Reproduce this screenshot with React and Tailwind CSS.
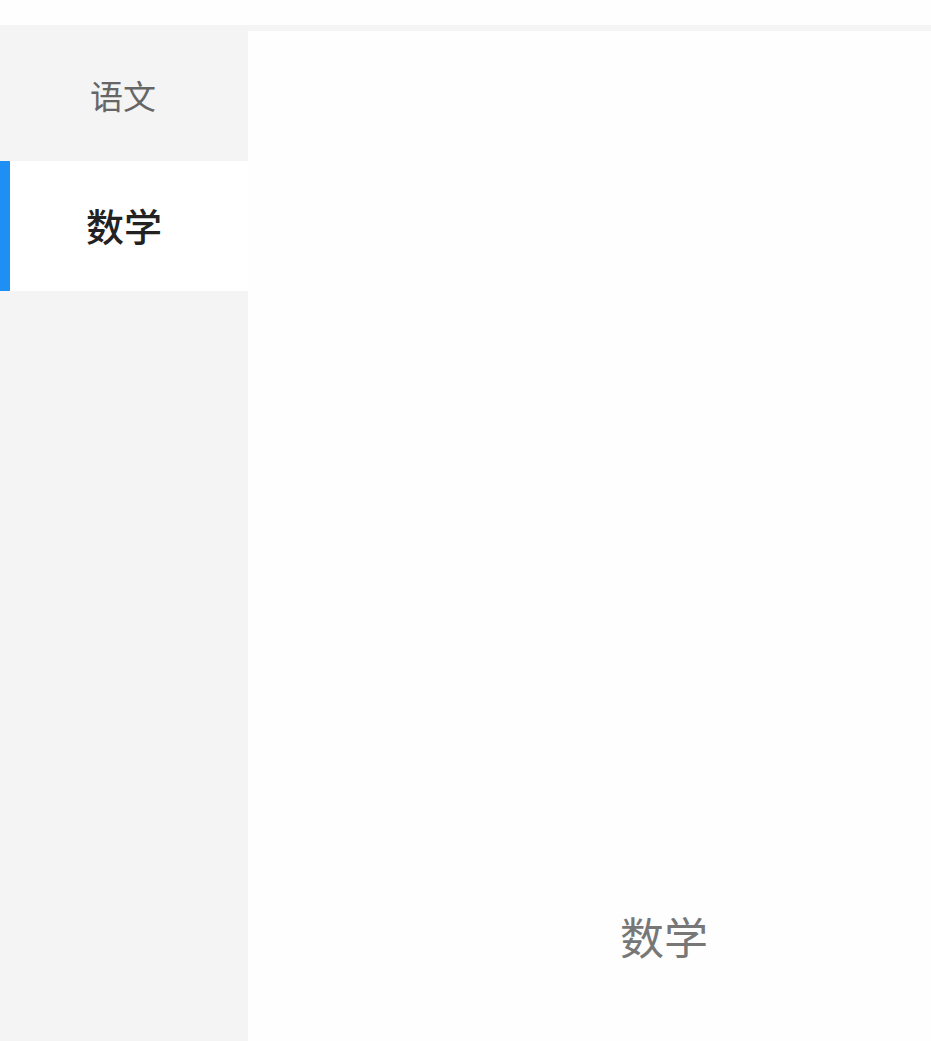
export default function App() {
  const font = { fontFamily: '"Noto Sans CJK SC", "Noto Sans", sans-serif' };
  return (
    <div className="w-[931px] h-[1041px] bg-white flex flex-col overflow-hidden" style={font}>
      <div className="h-[25px] bg-[#fefefe]" />
      <div className="h-[6px] bg-[#f4f4f4]" />
      <div className="flex flex-1">
        <div className="w-[248px] bg-[#f4f4f4] flex flex-col">
          <div className="h-[130px] flex items-center justify-center pr-[2px] text-[33px] text-[#666666]">
            语文
          </div>
          <div className="h-[130px] flex items-center justify-center bg-white border-l-[10px] border-[#1e8ff5] pr-[10px] pb-[3px] text-[38px] font-medium text-[#222222]">
            数学
          </div>
        </div>
        <div className="flex-1 bg-[#fefefe] flex flex-col justify-end items-start pb-[83px] pl-[372px]">
          <span className="text-[44px] text-[#777777] leading-none">数学</span>
        </div>
      </div>
    </div>
  );
}
